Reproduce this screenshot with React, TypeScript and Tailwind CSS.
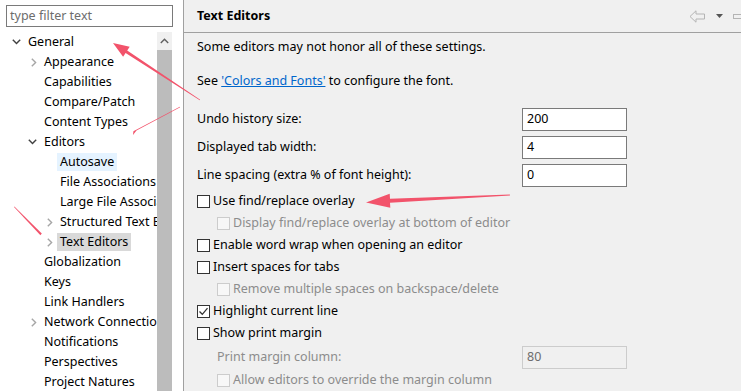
import React from "react";

type Item = {
  label: string;
  level: number;
  chev?: "down" | "right";
  sel?: "blue" | "gray";
};

const items: Item[] = [
  { label: "General", level: 0, chev: "down" },
  { label: "Appearance", level: 1, chev: "right" },
  { label: "Capabilities", level: 1 },
  { label: "Compare/Patch", level: 1 },
  { label: "Content Types", level: 1 },
  { label: "Editors", level: 1, chev: "down" },
  { label: "Autosave", level: 2, sel: "blue" },
  { label: "File Associations", level: 2 },
  { label: "Large File Associations", level: 2 },
  { label: "Structured Text Editors", level: 2, chev: "right" },
  { label: "Text Editors", level: 2, chev: "right", sel: "gray" },
  { label: "Globalization", level: 1 },
  { label: "Keys", level: 1 },
  { label: "Link Handlers", level: 1 },
  { label: "Network Connections", level: 1, chev: "right" },
  { label: "Notifications", level: 1 },
  { label: "Perspectives", level: 1 },
  { label: "Project Natures", level: 1 },
];

const indent = ["pl-0", "pl-[16px]", "pl-[32px]"];

const Chevron = ({ dir }: { dir?: "down" | "right" }) => {
  if (dir === "down") {
    return (
      <svg width="9" height="6" viewBox="0 0 9 6" className="ml-[12px]">
        <path d="M0.8 0.8 L4.5 4.6 L8.2 0.8" fill="none" stroke="#404040" strokeWidth="1.4" />
      </svg>
    );
  }
  if (dir === "right") {
    return (
      <svg width="6" height="9" viewBox="0 0 6 9" className="ml-[15px]">
        <path d="M0.8 0.8 L4.6 4.5 L0.8 8.2" fill="none" stroke="#a6a6a6" strokeWidth="1.4" />
      </svg>
    );
  }
  return null;
};

const TreeRow = ({ item }: { item: Item }) => {
  const bg =
    item.sel === "blue" ? "bg-[#e5f3ff]" : item.sel === "gray" ? "bg-[#d9d9d9]" : "bg-transparent";
  return (
    <div className={"flex h-[20px] items-center whitespace-nowrap " + indent[item.level]}>
      <span className="flex w-[28px] shrink-0 items-center">
        <Chevron dir={item.chev} />
      </span>
      <span className={"-ml-[3px] px-[3px] leading-[18px] " + bg}>{item.label}</span>
    </div>
  );
};

const Checkbox = ({ checked, disabled }: { checked?: boolean; disabled?: boolean }) => (
  <span
    className={
      "flex h-[13px] w-[13px] shrink-0 items-center justify-center border " +
      (disabled ? "border-[#cccccc] bg-[#f7f7f7]" : "border-[#333333] bg-white")
    }
  >
    {checked && (
      <svg width="11" height="11" viewBox="0 0 11 11">
        <path d="M1.5 5.5 L4.3 8.3 L9.5 2.2" fill="none" stroke="#333" strokeWidth="1.3" />
      </svg>
    )}
  </span>
);

const CheckRow = ({
  label,
  checked,
  disabled,
}: {
  label: string;
  checked?: boolean;
  disabled?: boolean;
}) => (
  <div className={"flex h-[22px] items-center gap-[3px] " + (disabled ? "pl-[20px] text-[#8c8c8c]" : "")}>
    <Checkbox checked={checked} disabled={disabled} />
    <span>{label}</span>
  </div>
);

const FieldRow = ({ label, value, disabled }: { label: string; value: string; disabled?: boolean }) => (
  <div className="flex h-[23px] items-center">
    <span className={"w-[325px] " + (disabled ? "pl-[20px] text-[#8c8c8c]" : "")}>{label}</span>
    <div
      className={
        "flex h-[23px] w-[105px] items-center border px-[4px] " +
        (disabled ? "border-[#cccccc] bg-[#f0f0f0] text-[#6d6d6d]" : "border-[#7a7a7a] bg-white")
      }
    >
      {value}
    </div>
  </div>
);

export default function App() {
  return (
    <div
      className="relative flex h-[391px] w-[741px] overflow-hidden bg-[#f0f0f0] text-[12.5px] text-black"
      style={{ fontFamily: '"Noto Sans", "Open Sans", sans-serif' }}
    >
      {/* left: filter + tree */}
      <div className="flex w-[184px] shrink-0 flex-col border-r border-[#a0a0a0] bg-white">
        <div className="pl-[6px] pt-[5px]">
          <div className="flex h-[22px] w-[167px] items-center border border-[#7a7a7a] px-[3px] pt-[1px] text-[#6d6d6d]">
            type filter text
          </div>
        </div>
        <div className="mt-[5px] flex flex-1">
          <div className="w-[157px] overflow-hidden">
            {items.map((item, i) => (
              <TreeRow key={i} item={item} />
            ))}
          </div>
          <div className="flex w-[15px] flex-col">
            <div className="flex h-[18px] items-center justify-center bg-[#f0f0f0]">
              <svg width="9" height="6" viewBox="0 0 9 6">
                <path d="M0.8 5 L4.5 1.3 L8.2 5" fill="none" stroke="#606060" strokeWidth="1.4" />
              </svg>
            </div>
            <div className="flex-1 bg-[#bcbcbc]" />
          </div>
        </div>
      </div>

      {/* right: preference page */}
      <div className="flex flex-1 flex-col">
        <div className="flex h-[33px] items-center border-b border-[#a0a0a0] pl-[13px]">
          <span className="font-bold">Text Editors</span>
          <div className="ml-auto flex items-center gap-[10px]">
            <svg width="17" height="13" viewBox="0 0 17 13">
              <path d="M1 6.5 L7 0.8 L7 4 L15.5 4 L15.5 9 L7 9 L7 12.2 Z" fill="none" stroke="#b4b4b4" strokeWidth="1" />
            </svg>
            <svg width="7" height="4" viewBox="0 0 7 4">
              <path d="M0 0 L7 0 L3.5 4 Z" fill="#555" />
            </svg>
            <div className="h-[5px] w-[8px] border border-[#b4b4b4] border-r-0" />
          </div>
        </div>

        <div className="flex flex-col pl-[13px] pt-[4px]">
          <div className="flex h-[20px] items-center">Some editors may not honor all of these settings.</div>
          <div className="mt-[14px] flex h-[20px] items-center">
            See&nbsp;<span className="text-[#0066cc] underline">'Colors and Fonts'</span>&nbsp;to configure the font.
          </div>
          <div className="mt-[17px] flex flex-col gap-[5px]">
            <FieldRow label="Undo history size:" value="200" />
            <FieldRow label="Displayed tab width:" value="4" />
            <FieldRow label="Line spacing (extra % of font height):" value="0" />
          </div>
          <div className="mt-[3px] flex flex-col">
            <CheckRow label="Use find/replace overlay" />
            <CheckRow label="Display find/replace overlay at bottom of editor" disabled />
            <CheckRow label="Enable word wrap when opening an editor" />
            <CheckRow label="Insert spaces for tabs" />
            <CheckRow label="Remove multiple spaces on backspace/delete" disabled />
            <CheckRow label="Highlight current line" checked />
            <CheckRow label="Show print margin" />
          </div>
          <div className="mt-[2px]">
            <FieldRow label="Print margin column:" value="80" disabled />
          </div>
          <CheckRow label="Allow editors to override the margin column" disabled />
        </div>
      </div>

      {/* red annotation strokes */}
      <svg className="pointer-events-none absolute inset-0" width="741" height="391" viewBox="0 0 741 391">
        <g fill="#f2536b">
          <polygon points="113,43 129.7,46.8 127.2,50.6 200.2,99.8 199.8,100.3 125.6,53.1 123.1,56.8" />
          <polygon points="133,135 136.5,130.5 180.2,107.3 179.8,106.8 133.4,131.2" />
          <polygon points="14,207 14.4,206.6 41.8,233.6 40.4,235.2" />
          <polygon points="366,202.5 389.7,193.8 390,198.8 510,194.6 510,195.4 390,202.8 390.3,207.8" />
        </g>
      </svg>
    </div>
  );
}
